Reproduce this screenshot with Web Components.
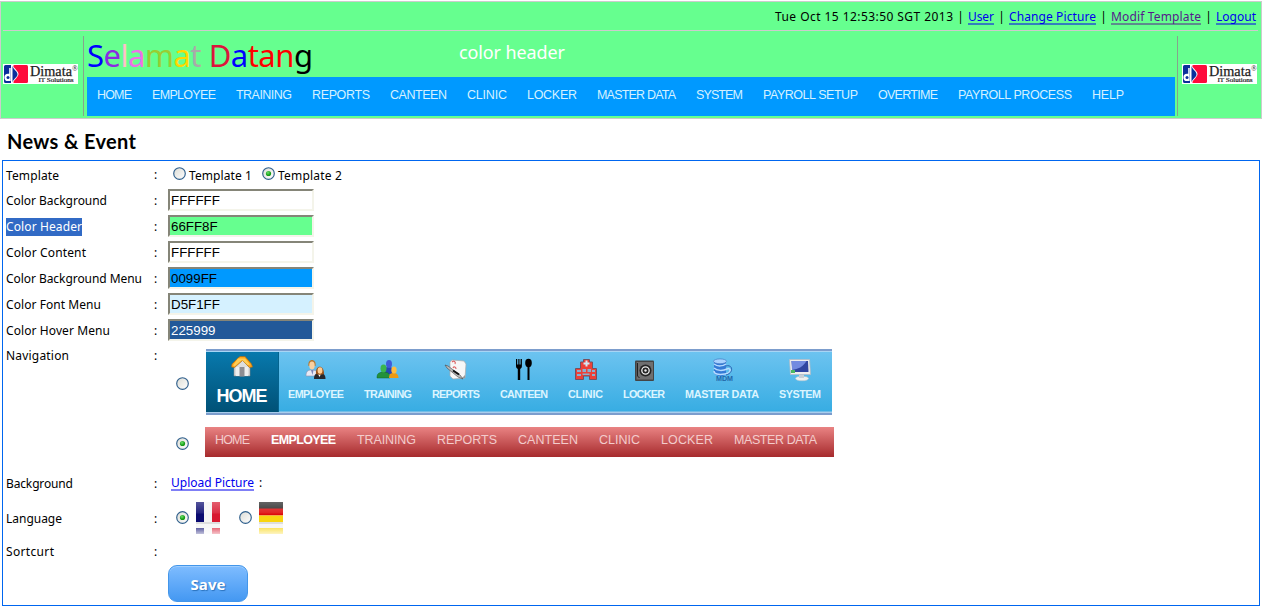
<!DOCTYPE html>
<html lang="en">
<head>
<meta charset="utf-8">
<title>Modif Template</title>
<style>
html,body{margin:0;background:#fff}
body{font:12px "Noto Sans","Open Sans",sans-serif;color:#000}
</style>
</head>
<body>
<template-page></template-page>
<script>
function define(name, html, setup) {
  const tpl = document.createElement('template');
  tpl.innerHTML = html;
  customElements.define(name, class extends HTMLElement {
    constructor() {
      super();
      this.attachShadow({mode: 'open'}).appendChild(tpl.content.cloneNode(true));
    }
    connectedCallback() { if (setup) setup(this, this.shadowRoot); }
  });
}

// Text tracked out (or in) so that it fills the width given by its "w" attribute.
define('fit-text', `<style>
:host{display:inline-block;white-space:nowrap}
span{display:inline-block;white-space:nowrap}</style><span><slot></slot></span>`, (el, root) => {
  const w = +el.getAttribute('w');
  const n = el.textContent.length;
  const span = root.querySelector('span');
  span.style.letterSpacing = '0px';
  const natural = span.getBoundingClientRect().width;
  const ls = n > 1 ? (w - natural) / (n - 1) : 0;
  span.style.letterSpacing = ls + 'px';
  span.style.marginRight = -ls + 'px';
  el.style.width = w + 'px';
});

define('text-link', `<style>
:host{display:block;color:#00e;position:relative;height:18px}
:host([visited]){color:#551a8b}
:host::after{content:"";position:absolute;left:0;right:0;top:14.500px;height:1px;background:currentColor;transform:translateY(.5px)}
</style><slot></slot>`);

define('dimata-logo', `<style>:host{display:block;width:75px;height:20px}svg{display:block}</style>
<svg width="75" height="20" viewBox="0 0 75 20">
<rect width="75" height="20" fill="#fff"/>
<rect x="10" y="1" width="15" height="18" rx="1.500" fill="#ff0a3c"/>
<path d="M1 1h8.500c2 4 6 6 6 9s-4 5-5.500 9H1z" fill="#fff"/>
<path d="M2.500 1H8v18H2.500A1.500 1.500 0 0 1 1 17.500v-15A1.500 1.500 0 0 1 2.500 1z" fill="#0c2f9c"/>
<path d="M9.500 2c1 4 5 5 5 8.300s-4 4.200-5 8.200z" fill="#0c2f9c"/>
<path d="M6.200 4h1.500v13H5a3.500 3.500 0 0 1 0-7.200h1.200z" fill="#fff"/><circle cx="5" cy="13.400" r="1.500" fill="#0c2f9c"/>
<text x="27" y="12" font-family="Liberation Serif,serif" font-size="14" fill="#222" stroke="#222" stroke-width=".25" textLength="42" lengthAdjust="spacingAndGlyphs">Dimata</text>
<text x="69" y="6.500" font-family="Liberation Serif,serif" font-size="7.500" fill="#222">®</text>
<text x="35.500" y="18.300" font-family="Liberation Serif,serif" font-size="6" fill="#222" stroke="#222" stroke-width=".2" textLength="35" lengthAdjust="spacingAndGlyphs">IT Solutions</text>
</svg>`);

define('top-links', `<style>
:host{display:flex;justify-content:flex-end;height:29px;box-sizing:border-box;padding:6px 2px 0 0;margin:0 3px 0 2px;border-bottom:1px solid #ccc;font-size:12px;line-height:18px}
nav{display:flex}
i{font-style:normal;width:15px;text-align:center}</style>
<nav><fit-text w="178">Tue Oct 15 12:53:50 SGT 2013</fit-text><i>|</i><text-link><fit-text w="26">User</fit-text></text-link><i>|</i><text-link><fit-text w="87">Change Picture</fit-text></text-link><i>|</i><text-link visited><fit-text w="90">Modif Template</fit-text></text-link><i>|</i><text-link><fit-text w="40">Logout</fit-text></text-link></nav>`);

define('rainbow-title', `<style>
:host{display:block;font-size:31px;line-height:41px;height:41px}</style>
<fit-text w="226"><span style="color:#00f">S</span><span style="color:#8a2be2">e</span><span style="color:#ffc0cb">l</span><span style="color:#ee6fe8">a</span><span style="color:#9acd32">m</span><span style="color:#ffd700">a</span><span style="color:#a9a9a9">t</span> <span style="color:#dc143c">D</span><span style="color:#00f">a</span><span style="color:red">tan</span><span style="color:#000">g</span></fit-text>`);

define('main-menu', `<style>
:host{display:flex;gap:20px;height:39px;box-sizing:border-box;padding:9px 0 0 10px;background:#09f;color:#d5f1ff;font:12.500px/18px "Liberation Sans",sans-serif}</style>
<fit-text w="35">HOME</fit-text><fit-text w="64">EMPLOYEE</fit-text><fit-text w="56">TRAINING</fit-text><fit-text w="58">REPORTS</fit-text><fit-text w="57">CANTEEN</fit-text><fit-text w="40">CLINIC</fit-text><fit-text w="50">LOCKER</fit-text><fit-text w="79">MASTER DATA</fit-text><fit-text w="47">SYSTEM</fit-text><fit-text w="95">PAYROLL SETUP</fit-text><fit-text w="60">OVERTIME</fit-text><fit-text w="114">PAYROLL PROCESS</fit-text><fit-text w="32">HELP</fit-text>`);

define('page-header', `<style>
:host{display:block;margin:1px 1px 0 0;height:118px;box-sizing:border-box;border:1px solid #ccc;background:#66ff8f}
.row{display:grid;grid-template-columns:82px 1px 1093px 1px 1fr;margin-top:5px;height:80px}
.line{background:#86a48d}
.l{display:flex;align-items:center;padding:0 0 4px 2px;box-sizing:border-box}
.r{display:flex;align-items:center;padding:0 0 4px 4px;box-sizing:border-box}
.mid{padding:0 2px 0 3px}
.t{display:grid;grid-template-columns:372px 1fr;height:41px;color:#fff}
.t rainbow-title{margin-top:-1px}
.t fit-text{font-size:18px;line-height:33px}</style>
<top-links></top-links>
<div class="row"><div class="l"><dimata-logo></dimata-logo></div><div class="line"></div>
<div class="mid"><div class="t"><rainbow-title></rainbow-title><fit-text w="106">color header</fit-text></div><main-menu></main-menu></div>
<div class="line"></div><div class="r"><dimata-logo></dimata-logo></div></div>`);

define('xp-radio', `<style>:host{display:block;width:13px;height:13px}svg{display:block}
.d{display:none}:host([checked]) .d{display:block}</style>
<svg width="13" height="13" viewBox="0 0 13 13"><defs><linearGradient id="g" x1="0" y1="0" x2="1" y2="1"><stop offset="0" stop-color="#dcdcd5"/><stop offset="1" stop-color="#fff"/></linearGradient><radialGradient id="k" cx=".4" cy=".35"><stop offset="0" stop-color="#6be06b"/><stop offset="1" stop-color="#169c16"/></radialGradient></defs>
<circle cx="6.500" cy="6.500" r="5.800" fill="url(#g)" stroke="#2f5f8c" stroke-width="1.150"/><circle class="d" cx="6.500" cy="6.500" r="2.600" fill="url(#k)"/></svg>`);

define('colour-field', `<style>
:host{display:block;width:146px;height:22px;box-sizing:border-box;border:2px solid;border-color:#858578 #f4f4ea #f4f4ea #858578;padding-left:1px;font:13.333px/19px "Liberation Sans",sans-serif;color:#000}</style><slot></slot>`);

define('form-row', `<style>
:host{display:grid;grid-template-columns:149px 16px 1fr;align-items:center;height:26px;font-size:12px;line-height:18px}
.a,.b{padding-top:2px}
:host([top]) .a,:host([top]) .b{align-self:start;padding-top:4px}
.a{padding-left:3px}
.c{display:flex;align-items:center}
::slotted(fit-text[hot]){background:#316ac5;color:#fff}
.b{padding-left:2px}</style>
<div class="a"><slot name="label"></slot></div><div class="b">:</div><div class="c"><slot></slot></div>`);

const ICONS = {
home: `<path d="M4 10l8-7 8 7v11H4z" fill="#ddd" stroke="#888" stroke-width=".6"/><path d="M6 12h12v9H6z" fill="#eee"/><rect x="9.500" y="12" width="5" height="9.500" fill="#8d8d92"/><path d="M7.500 3.500L10 1.500h5l6.500 7.500 1 3-3 .5-7-7-8 7-3-.5.5-3z" fill="#ffa51c" stroke="#a96b12" stroke-width=".7"/><path d="M8 3.500h7l5 6-2.500.500-5.500-5-7 6-2-.500z" fill="#ffcd55"/>`,
employee: `<path d="M2 18c0-5 2-6 6-6s6 2 6 6z" fill="#e8e9f4" stroke="#8e92ae" stroke-width=".6"/><path d="M7 12l1.500 5 1-5z" fill="#7a84b8"/><path d="M4.500 8C3 0 13 0 11.500 8z" fill="#b5782f"/><ellipse cx="8" cy="7.500" rx="2.700" ry="4" fill="#f8d0a0"/><path d="M10 21c0-5 2-6 5.500-6s6 1 6 6z" fill="#26282d"/><path d="M13.500 15h4l-2 4z" fill="#fff"/><path d="M12 16c-1-9 8-10 8 0-2 1-6 1-8 0z" fill="#9a5219"/><ellipse cx="16" cy="12.500" rx="2.400" ry="3.200" fill="#ffcd93"/>`,
training: `<path d="M7 16c0-6 2-7 6-7s4 2 5 7z" fill="#2448b5"/><ellipse cx="13" cy="6" rx="3" ry="4" fill="#3f5bda"/><path d="M1 20c0-5 2-5 5-6 6 0 8 1 8 6z" fill="#23913a" stroke="#126426" stroke-width=".5"/><ellipse cx="7.500" cy="10.500" rx="3" ry="4" fill="#3bb54e"/><path d="M13 20c0-4 2-5 4.500-5s5 1 5 5z" fill="#eb9a14"/><ellipse cx="18" cy="12" rx="2.700" ry="3.500" fill="#ffbd40"/>`,
reports: `<path d="M6 4l2-2 12 1 2 3-1 14-12 1-3-3z" fill="#f7f7f7" stroke="#aaa" stroke-width=".7"/><path d="M8 4c2-2 4 0 3 2M9 10c1-2 3-1 3 1" fill="none" stroke="#d66" stroke-width="1.200"/><path d="M18 20l3-3v3z" fill="#999"/><path d="M1 7l3 1 12 9 3 4-5-2L3 10z" fill="#bbb" stroke="#444" stroke-width=".6"/><path d="M9 12.500l6 4" stroke="#111" stroke-width="2"/>`,
canteen: `<path d="M4 1h1.200v5.500h1.100V1h1.200v5.500h1.100V1h1.300v7c0 2-1 2.500-1.700 3v11H5.800V11C5 10.500 4 10 4 8z"/><ellipse cx="16.500" cy="5" rx="3.300" ry="4.200"/><path d="M15.500 8h2v14h-2z"/>`,
clinic: `<path d="M1.500 21.500v-11h5V4h3V1.500h6V4h3v6.500h4v11h-7V18h-6v3.500z" fill="#ed4038" stroke="#76505f" stroke-width="1"/><path d="M12.500 2.500v6M9.500 5.500h6" stroke="#d5e7f4" stroke-width="2"/><path d="M3 12h4v2H3zM8.500 11h3.500v3H8.500zM13.500 11H17v3h-3.500zM18 12h3v2h-3zM3 16h4v2H3zM8.500 15.500h7v1.500h-7zM18 16h3v2h-3z" fill="#8bb0cf"/>`,
locker: `<rect x="3" y="2.500" width="19" height="20.500" rx="1" fill="#444"/><rect x="4.500" y="4" width="16.500" height="17.500" fill="#6f6f70"/><path d="M5.500 5v13l2 2" fill="none" stroke="#222"/><circle cx="13.500" cy="12.500" r="6" fill="#242424"/><circle cx="13.500" cy="12.500" r="3.700" fill="none" stroke="#eee" stroke-width="1.300"/><circle cx="13.500" cy="12.500" r="1.200" fill="#eee"/>`,
master: `<path d="M4 3v12c2 4 10 4 12 1V3z" fill="#357bd6"/><ellipse cx="10" cy="3.300" rx="6.500" ry="2.400" fill="#a9d2ff" stroke="#3c72c0" stroke-width=".6"/><path d="M4 6c4 3 9 2 12 0M4 10c3 3 9 3 13 1s5 4-2 5-11 0-11-3" fill="none" stroke="#b9dcff" stroke-width="1.500"/><path d="M16 8c7-2 8 7 0 9" fill="none" stroke="#2b60b1" stroke-width="1"/><text x="6" y="22.500" font-family="Liberation Sans,sans-serif" font-weight="700" font-size="7" fill="#2368aa" textLength="17" lengthAdjust="spacingAndGlyphs">MDM</text>`,
system: `<ellipse cx="14" cy="20.500" rx="6.500" ry="2.300" fill="#edf0ef" stroke="#aebfc8" stroke-width=".5"/><path d="M11 16h5v4h-5z" fill="#c7d0d7"/><path d="M1.500 1.500h20l1 15h-20z" fill="#eee" stroke="#b3bdc8" stroke-width=".8"/><path d="M3.500 3h16.500l.5 11H4.500z" fill="#3045a0"/><path d="M3.500 3h15C15 9 10 11 4 12z" fill="#738be0"/><path d="M3 12h4v3H3z" fill="#4cb962"/>`
};
define('nav-icon', `<style>:host{display:block;width:24px;height:24px}svg{display:block}</style><svg width="24" height="24" viewBox="0 0 24 24"></svg>`,
 (el, root) => { root.querySelector('svg').innerHTML = ICONS[el.getAttribute('name')]; });

define('nav-tile', `<style>
:host{display:flex;flex-direction:column;align-items:center;padding-top:7px;box-sizing:border-box;font:bold 10.800px/14px "Liberation Sans",sans-serif;color:#dcf5ff}
nav-icon{margin-bottom:5px}
:host([active]){width:73px;height:60px;padding-top:3px;margin-top:1px;margin-right:9px;background:linear-gradient(#0879ad,#005176);border-right:1px solid #05648f;font-size:18px;line-height:20px;color:#fff}
:host([active]) nav-icon{margin-bottom:7px}</style>
<slot></slot>`, (el, root) => {
  const icon = document.createElement('nav-icon');
  icon.setAttribute('name', el.getAttribute('icon'));
  root.insertBefore(icon, root.querySelector('slot'));
});

define('blue-nav', `<style>
:host{display:flex;width:626px;height:66px;box-sizing:border-box;border:solid #7c9dcd;border-width:2px 0;background:linear-gradient(#a8d5f5 0 1px,#6cc3f0 1px,#38ade3 60px,#a9cdec 61px)}
.g{display:flex;gap:20px}</style>
<nav-tile icon="home" active><fit-text w="51">HOME</fit-text></nav-tile><div class="g">
<nav-tile icon="employee"><fit-text w="56">EMPLOYEE</fit-text></nav-tile>
<nav-tile icon="training"><fit-text w="48">TRAINING</fit-text></nav-tile>
<nav-tile icon="reports"><fit-text w="48">REPORTS</fit-text></nav-tile>
<nav-tile icon="canteen"><fit-text w="48">CANTEEN</fit-text></nav-tile>
<nav-tile icon="clinic"><fit-text w="35">CLINIC</fit-text></nav-tile>
<nav-tile icon="locker"><fit-text w="42">LOCKER</fit-text></nav-tile>
<nav-tile icon="master"><fit-text w="74">MASTER DATA</fit-text></nav-tile>
<nav-tile icon="system"><fit-text w="42">SYSTEM</fit-text></nav-tile></div>`);

define('red-nav', `<style>
:host{display:flex;gap:21px;width:629px;height:30px;box-sizing:border-box;padding:4px 0 0 10px;background:linear-gradient(#e98383,#a62a2c);font:12.500px/18px "Liberation Sans",sans-serif;color:#f3cccc}
b{color:#fff}</style>
<fit-text w="35">HOME</fit-text><b><fit-text w="65">EMPLOYEE</fit-text></b><fit-text w="59">TRAINING</fit-text><fit-text w="60">REPORTS</fit-text><fit-text w="60">CANTEEN</fit-text><fit-text w="41">CLINIC</fit-text><fit-text w="52">LOCKER</fit-text><fit-text w="83">MASTER DATA</fit-text>`);

define('nav-choices', `<style>
:host{display:block;height:128px}
div{display:flex;align-items:center}
.one{padding:6px 0 0 8px;gap:17px}
.one xp-radio{margin-top:3px}
.two{padding:12px 0 0 8px;gap:16px}
.two xp-radio{margin-top:2px}</style>
<div class="one"><xp-radio></xp-radio><blue-nav></blue-nav></div>
<div class="two"><xp-radio checked></xp-radio><red-nav></red-nav></div>`);

define('flag-icon', `<style>:host{display:block;width:24px;height:32px}svg{display:block}
.de{display:none}:host([country=de]) .de{display:block}:host([country=de]) .fr{display:none}</style>
<svg width="24" height="32"><defs><linearGradient id="s" x2="0" y2="1"><stop stop-color="#fff" stop-opacity=".3"/><stop offset=".55" stop-color="#fff" stop-opacity=".1"/><stop offset=".6" stop-color="#fff" stop-opacity="0"/></linearGradient><linearGradient id="r" x2="0" y2="1"><stop stop-color="#fff" stop-opacity=".35"/><stop offset="1" stop-color="#fff" stop-opacity=".75"/></linearGradient></defs>
<g class="fr"><path d="M0 0h8v32H0z" fill="#0a0a70"/><path d="M8 0h8v32H8z" fill="#f4f4f4"/><path d="M16 0h8v32h-8z" fill="#d81830"/></g>
<g class="de"><path d="M0 0h24v7H0z" fill="#222"/><path d="M0 6.500h24v7H0z" fill="#dd0b0b"/><path d="M0 13.500h24V32H0z" fill="#f8d510"/></g>
<rect width="24" height="20" fill="url(#s)"/><rect y="20" width="24" height="2" fill="#dedede"/><rect y="22" width="24" height="4" fill="#f6f6f6"/><rect y="26" width="24" height="6" fill="url(#r)"/></svg>`);

define('save-button', `<style>
:host{display:flex;align-items:center;justify-content:center;width:80px;height:37px;box-sizing:border-box;border:1px solid #4396ea;border-radius:9px;background:linear-gradient(#7ebcff,#4498f2);box-shadow:inset 0 1px #9fceff;color:#fff;font:bold 15px/20px "Noto Sans",sans-serif;text-shadow:1px 1px 1px #2a72bd}</style><fit-text w="35">Save</fit-text>`);

define('template-form', `<style>
:host{display:block;margin:0 3px 0 2px;height:446px;box-sizing:border-box;border:1px solid #0066f0}
xp-radio{flex:none}
text-link{margin:0 5px 0 3px}</style>
<form-row><fit-text slot="label" w="53" style="margin-top:1px">Template</fit-text><xp-radio style="margin:-1px 3px 0 5px"></xp-radio><fit-text w="63" style="margin-top:3px">Template 1</fit-text><xp-radio checked style="margin:-1px 3px 0 10px"></xp-radio><fit-text w="64" style="margin-top:3px">Template 2</fit-text></form-row>
<form-row><fit-text slot="label" w="101">Color Background</fit-text><colour-field style="background:#fff">FFFFFF</colour-field></form-row>
<form-row><fit-text slot="label" hot w="76">Color Header</fit-text><colour-field style="background:#66ff8f">66FF8F</colour-field></form-row>
<form-row><fit-text slot="label" w="80">Color Content</fit-text><colour-field style="background:#fff">FFFFFF</colour-field></form-row>
<form-row><fit-text slot="label" w="136">Color Background Menu</fit-text><colour-field style="background:#09f">0099FF</colour-field></form-row>
<form-row><fit-text slot="label" w="95">Color Font Menu</fit-text><colour-field style="background:#d5f1ff">D5F1FF</colour-field></form-row>
<form-row><fit-text slot="label" w="104">Color Hover Menu</fit-text><colour-field style="background:#225999;color:#fff">225999</colour-field></form-row>
<form-row top style="height:128px"><fit-text slot="label" w="63">Navigation</fit-text><nav-choices></nav-choices></form-row>
<form-row style="height:24px"><fit-text slot="label" w="67">Background</fit-text><text-link><fit-text w="83">Upload Picture</fit-text></text-link>:</form-row>
<form-row style="height:40px;margin-top:3px"><fit-text slot="label" w="56">Language</fit-text><xp-radio checked style="margin:-1px 7px 0 8px"></xp-radio><flag-icon country="fr"></flag-icon><xp-radio style="margin:-1px 7px 0 19px"></xp-radio><flag-icon country="de"></flag-icon></form-row>
<form-row><fit-text slot="label" w="48">Sortcurt</fit-text></form-row>
<save-button style="margin:1px 0 0 165px"></save-button>`);

define('template-page', `<style>
:host{display:block;height:609px;overflow:hidden}
h1{margin:0;height:41px;padding-left:7px;font:bold 20px/44px Lato,sans-serif;box-sizing:border-box}</style>
<page-header></page-header>
<h1><fit-text w="129">News &amp; Event</fit-text></h1>
<template-form></template-form>`);
</script>
</body>
</html>
